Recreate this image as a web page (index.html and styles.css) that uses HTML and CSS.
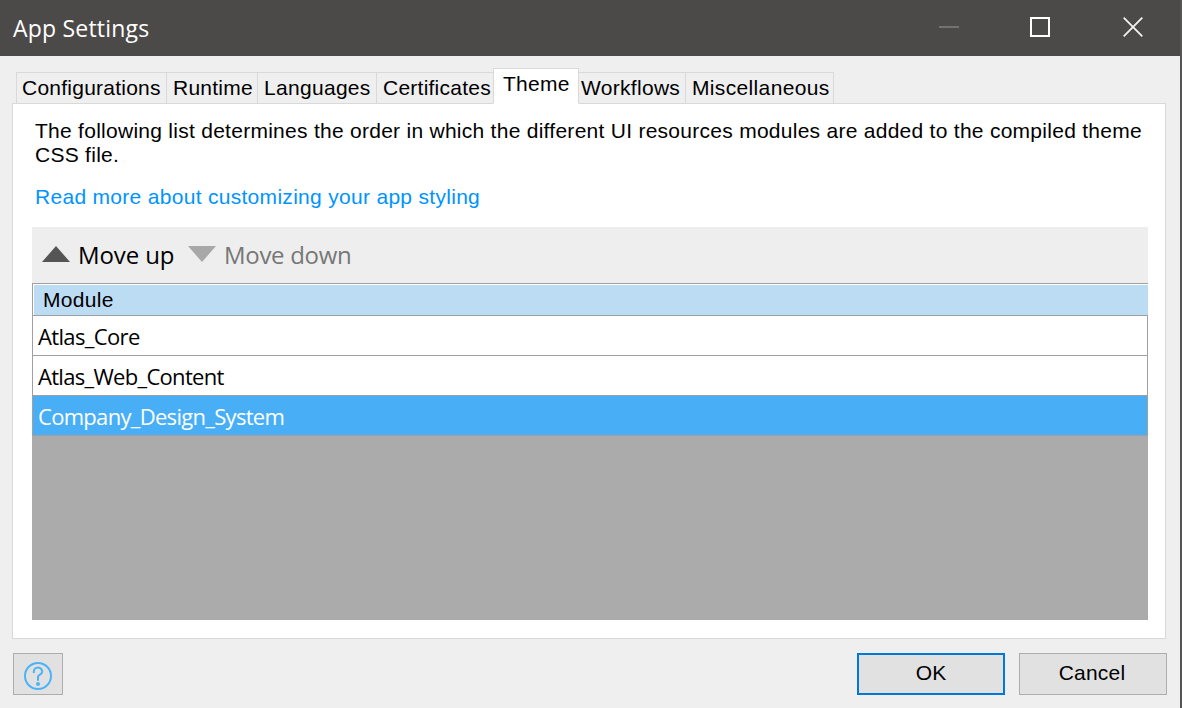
FILE: index.html
```html
<!DOCTYPE html>
<html lang="en">
<head>
<meta charset="utf-8">
<title>App Settings</title>
<link rel="stylesheet" href="styles.css">
</head>
<body>
<div class="window">
  <header class="titlebar">
    <h1 class="title">App Settings</h1>
    <div class="controls">
      <svg width="20" height="20" viewBox="0 0 20 20"><path d="M0 10h20" stroke="#73726f" stroke-width="2"/></svg>
      <svg width="20" height="20" viewBox="0 0 20 20"><rect x="1" y="1" width="18" height="18" fill="none" stroke="#fff" stroke-width="2"/></svg>
      <svg width="20" height="20" viewBox="0 0 20 20"><path d="M.7.7l18.6 18.6M19.3.7L.7 19.3" stroke="#f2f2f2" stroke-width="1.8"/></svg>
    </div>
  </header>
  <main class="content">
    <nav class="tabs">
      <div class="tab configurations"><span>Configurations</span></div>
      <div class="tab runtime"><span>Runtime</span></div>
      <div class="tab languages"><span>Languages</span></div>
      <div class="tab certificates"><span>Certificates</span></div>
      <div class="tab theme active"><span>Theme</span></div>
      <div class="tab workflows"><span>Workflows</span></div>
      <div class="tab miscellaneous"><span>Miscellaneous</span></div>
    </nav>
    <section class="panel">
      <p class="description"><span>The following list determines the order in which the different UI resources modules are added to the compiled theme</span><br><span>CSS file.</span></p>
      <a class="link"><span>Read more about customizing your app styling</span></a>
      <div class="grid">
        <div class="toolbar">
          <svg width="28" height="16" viewBox="0 0 28 16"><path d="M14 0l14 16H0z" fill="#555"/></svg>
          <span class="up">Move up</span>
          <svg class="down-icon" width="28" height="16" viewBox="0 0 28 16"><path d="M0 0h28L14 16z" fill="#a8a8a8"/></svg>
          <span class="down">Move down</span>
        </div>
        <div class="head"><span>Module</span></div>
        <div class="row"><span class="core">Atlas_Core</span></div>
        <div class="row"><span class="web">Atlas_Web_Content</span></div>
        <div class="row selected"><span class="company">Company_Design_System</span></div>
      </div>
    </section>
  </main>
  <footer class="footer">
    <button class="button help" aria-label="Help">
      <svg width="28" height="28" viewBox="0 0 28 28" fill="none" stroke="#4ab3f8" stroke-width="2"><circle cx="14" cy="14" r="13"/><path d="M9.8 11V9.8a4.2 4.2 0 0 1 8.4 0c0 2.8-4.2 2.8-4.2 5.2v3.8"/><circle cx="14" cy="22" r="2" fill="#4ab3f8" stroke="none"/></svg>
    </button>
    <button class="button ok"><span>OK</span></button>
    <button class="button cancel"><span>Cancel</span></button>
  </footer>
</div>
</body>
</html>
```
FILE: styles.css
```css
* { box-sizing: border-box; }
body { margin: 0; font: 21px/24px "Liberation Sans", Arial, sans-serif; color: #000; }
svg { display: block; flex: none; }
.window { display: flex; flex-direction: column; width: 1182px; height: 708px; background: #efefef; border-right: 2px solid #555; }
.titlebar { display: flex; justify-content: space-between; height: 56px; padding: 0 37px 0 13px; background: #4c4a48; color: #fff; }
.title { margin: 0; font: 400 23px/56px "Open Sans", "Noto Sans", sans-serif; letter-spacing: .2px; }
.controls { display: grid; grid-template-columns: 91px 93px 20px; padding-top: 17px; }
.content { padding: 12px 14px 0 12px; }
.tabs { display: flex; align-items: flex-end; height: 36px; padding-left: 4px; margin-bottom: -1px; position: relative; white-space: nowrap; }
.tab { height: 32px; padding: 3px 0 0 6px; border: 1px solid #d9d9d9; border-right: 0; letter-spacing: .24px; }
.configurations { width: 150px; padding-left: 5px; }
.runtime { width: 91px; }
.languages { width: 119px; letter-spacing: .3px; }
.certificates { width: 117px; }
.theme { width: 86px; padding-left: 9px; border-right: 1px solid #d9d9d9; }
.workflows { width: 106px; padding-left: 2px; border-left: 0; letter-spacing: .3px; }
.miscellaneous { width: 149px; border-right: 1px solid #d9d9d9; letter-spacing: .35px; }
.active { height: 36px; background: #fff; border-bottom-color: #fff; }
.panel { height: 536px; padding: 15px 17px 0 19px; background: #fff; border: 1px solid #d9d9d9; }
.description { margin: 0 0 18px 3px; white-space: nowrap; letter-spacing: .27px; }
.link { display: block; margin: 0 0 18px 3px; color: #0094ff; letter-spacing: .3px; }
.grid { width: 1116px; height: 393px; background: #ababab; }
.toolbar { display: flex; align-items: center; height: 56px; padding: 0 10px 2px; background: #eee; font: 24px/56px "Open Sans", "Noto Sans", sans-serif; white-space: nowrap; }
.toolbar span { padding-top: 2px; }
.up { width: 96px; margin-left: 8px; letter-spacing: -.1px; }
.down-icon { margin-left: 14px; }
.down { margin-left: 8px; color: #777; letter-spacing: -.3px; }
.head { height: 33px; padding: 4px 0 0 10px; border: 1px solid #a0a0a0; border-right: 0; background: #bbdcf3; box-shadow: inset 1px 1px #fff; letter-spacing: .3px; }
.row { height: 40px; background: #fff; border: 1px solid #a0a0a0; border-top: 0; padding-left: 5px; font: 22px/40px "Open Sans", "Noto Sans", sans-serif; }
.core { letter-spacing: -.65px; }
.web { letter-spacing: -.7px; }
.company { letter-spacing: -.7px; }
.selected { background: #48aff7; color: #fff; }
.footer { display: flex; padding: 14px 13px 0; }
.button { display: flex; align-items: center; justify-content: center; width: 148px; height: 42px; padding: 0 0 2px; border: 1px solid #adadad; background: #e1e1e1; color: #000; font: inherit; }
.help { width: 50px; padding: 4px 0 0; }
.ok { margin: 0 14px 0 auto; border: 2px solid #0078d7; }
.cancel { padding-right: 2px; letter-spacing: .2px; }
```
